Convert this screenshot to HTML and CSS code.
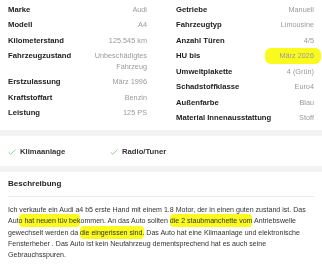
FILE: index.html
```html
<!DOCTYPE html>
<html lang="de">

<head>
    <meta charset="UTF-8">
    <meta name="viewport" content="width=device-width, initial-scale=1.0">
    <title>Audi A4</title>
    <link rel="stylesheet" href="styles.css">
</head>

<body>
    <section class="specs">
        <dl class="spec-col">
            <div class="row"><dt>Marke</dt><dd>Audi</dd></div>
            <div class="row"><dt>Modell</dt><dd>A4</dd></div>
            <div class="row"><dt>Kilometerstand</dt><dd>125.545 km</dd></div>
            <div class="row"><dt>Fahrzeugzustand</dt><dd>Unbeschädigtes<br>Fahrzeug</dd></div>
            <div class="row"><dt>Erstzulassung</dt><dd>März 1996</dd></div>
            <div class="row"><dt>Kraftstoffart</dt><dd>Benzin</dd></div>
            <div class="row"><dt>Leistung</dt><dd>125 PS</dd></div>
        </dl>
        <dl class="spec-col">
            <div class="row"><dt>Getriebe</dt><dd>Manuell</dd></div>
            <div class="row"><dt>Fahrzeugtyp</dt><dd>Limousine</dd></div>
            <div class="row"><dt>Anzahl Türen</dt><dd>4/5</dd></div>
            <div class="row"><dt>HU bis</dt><dd><span class="marker marker-hu">März 2026</span></dd></div>
            <div class="row"><dt>Umweltplakette</dt><dd>4 (Grün)</dd></div>
            <div class="row"><dt>Schadstoffklasse</dt><dd>Euro4</dd></div>
            <div class="row"><dt>Außenfarbe</dt><dd>Blau</dd></div>
            <div class="row"><dt>Material Innenausstattung</dt><dd>Stoff</dd></div>
        </dl>
    </section>

    <div class="band"></div>

    <ul class="features">
        <li>
            <svg class="check" viewBox="0 0 8 6" width="8" height="6"><path d="M0.6 3.2 L2.8 5.2 L7.4 0.6" fill="none" stroke="#9ccf9c" stroke-width="1"/></svg>
            Klimaanlage
        </li>
        <li>
            <svg class="check" viewBox="0 0 8 6" width="8" height="6"><path d="M0.6 3.2 L2.8 5.2 L7.4 0.6" fill="none" stroke="#9ccf9c" stroke-width="1"/></svg>
            Radio/Tuner
        </li>
    </ul>

    <div class="band"></div>

    <section class="description">
        <h2>Beschreibung</h2>
        <p>Ich verkaufe ein Audi a4 b5 erste Hand mit einem 1.8 Motor, der in einen guten zustand ist. Das Aut<span class="marker">o hat neuen tüv bek</span>ommen. An das Auto sollten <span class="marker">die 2 staubmanchette vom</span> Antriebswelle gewechselt werden da <span class="marker">die eingerissen sind.</span> Das Auto hat eine Klimaanlage und elektronische Fensterheber . Das Auto ist kein Neufahrzeug dementsprechend hat es auch seine Gebrauchsspuren.</p>
    </section>
</body>

</html>
```

FILE: styles.css
```css
* {
    box-sizing: border-box;
    margin: 0;
    padding: 0;
    font-family: 'Liberation Sans', Arial, sans-serif;
}

body {
    background: #fff;
    color: #222;
}

.specs {
    display: grid;
    grid-template-columns: 139px 138px;
    column-gap: 29px;
    padding: 2px 8px 0;
}

.spec-col .row {
    display: flex;
    justify-content: space-between;
    align-items: flex-start;
    padding: 2.5px 0;
}

.spec-col dt {
    font-size: 7.7px;
    font-weight: 700;
    line-height: 10px;
    color: #222;
}

.spec-col dd {
    font-size: 7.3px;
    line-height: 10.5px;
    color: #9a9a9a;
    text-align: right;
}

.marker {
    background: #fafa1e;
    padding: 3px 0;
    border-radius: 4px;
    mix-blend-mode: multiply;
}

.marker-hu {
    padding: 3px 7px 4px 15px;
    margin: 0 -7px 0 -15px;
    border-radius: 6px;
}

.band {
    height: 6px;
    margin-top: 4px;
    background: #f3f3f3;
}

.features {
    list-style: none;
    display: flex;
    padding: 11px 8px 9px;
}

.features li {
    display: flex;
    align-items: center;
    width: 102px;
    font-size: 7.7px;
    font-weight: 700;
    line-height: 10px;
    color: #333;
}

.features .check {
    margin-right: 4px;
}

.features+.band {
    margin-top: 0;
}

.description {
    padding: 7px 8px 0;
}

.description h2 {
    font-size: 8px;
    font-weight: 700;
    line-height: 10px;
    color: #222;
    padding-bottom: 7px;
    border-bottom: 1px solid #ebebeb;
    margin-bottom: 7px;
}

.description p {
    font-size: 7.05px;
    line-height: 11.3px;
    color: #333;
}
```
